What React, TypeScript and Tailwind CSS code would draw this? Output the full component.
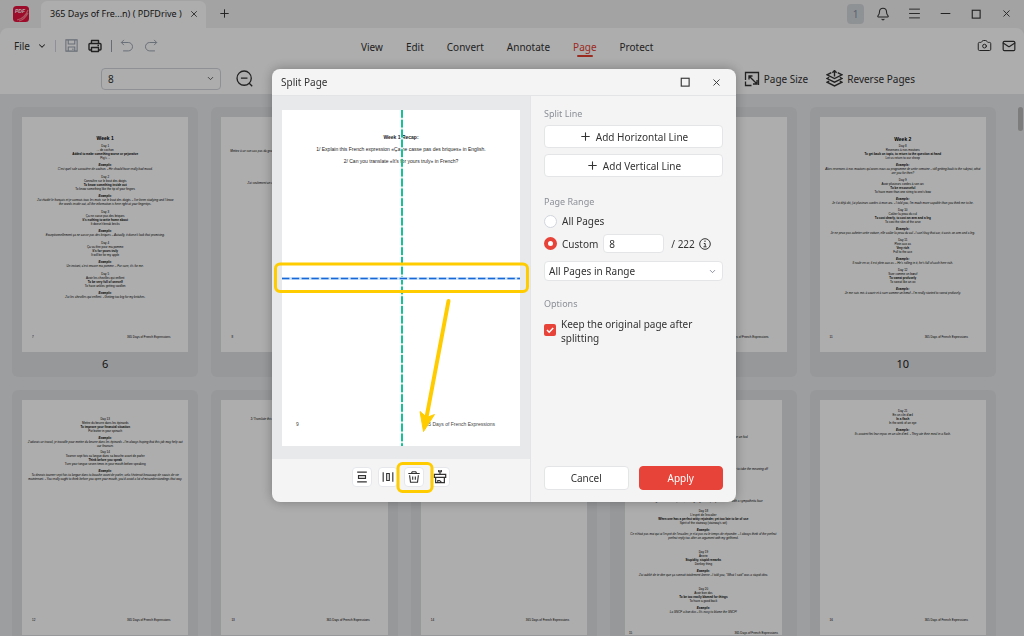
import type { ReactNode } from "react";
import { Bell, Camera, ChevronDown, Mail, Menu, Minus, Plus, X } from "lucide-react";

type Entry = {
  day: string;
  french: string;
  bold: string;
  english: string;
  example: string[];
};

type PageData = {
  label: string;
  folio: string;
  title?: string;
  top?: string;
  gap?: string;
  wide?: boolean;
  notes?: string[];
  entries?: Entry[];
};

const MENUS = ["View", "Edit", "Convert", "Annotate", "Page", "Protect"];

const PAGES: PageData[] = [
  {
    label: "6",
    folio: "7",
    title: "Week 1",
    top: "pt-[18px]",
    gap: "gap-[4px]",
    entries: [
      {
        day: "Day 1",
        french: "... de cochon",
        bold: "Added to make something worse or pejorative",
        english: "Pig's ...",
        example: ["C'est quel sale caractère de cochon. - He should have really bad mood."],
      },
      {
        day: "Day 2",
        french: "Connaître sur le bout des doigts",
        bold: "To know something inside out",
        english: "To know something like the tip of your fingers",
        example: [
          "J'ai étudié le français et je connais tous les mots sur le bout des doigts. - I've been studying and I know",
          "the words inside out, all the information is here right at your fingertips.",
        ],
      },
      {
        day: "Day 3",
        french: "Ça ne casse pas des briques",
        bold: "It's nothing to write home about",
        english: "It doesn't break bricks",
        example: ["Exceptionnellement ça ne casse pas des briques. - Actually, it doesn't look that promising."],
      },
      {
        day: "Day 4",
        french: "Ça va être pour ma pomme",
        bold: "It's for yours truly",
        english: "It will be for my apple",
        example: ["Un instant, c'est encore ma pomme. - For sure, it's for me."],
      },
      {
        day: "Day 5",
        french: "Avoir les chevilles qui enflent",
        bold: "To be very full of oneself",
        english: "To have ankles getting swollen",
        example: ["J'ai les chevilles qui enflent. - Getting too big for my britches."],
      },
    ],
  },
  {
    label: "7",
    folio: "8",
    top: "pt-[32px]",
    gap: "gap-[28px]",
    notes: [
      "Mettez à ce son cas pas du grand, si vous voulez bien, merci. - Put this on the other one, please, when you can.",
      "J'ai seulement un chien à la maison pour jouer avec les enfants. - I only have one dog.",
    ],
  },
  { label: "8", folio: "9" },
  { label: "9", folio: "10" },
  {
    label: "10",
    folio: "11",
    title: "Week 2",
    top: "pt-[19px]",
    gap: "gap-[3px]",
    entries: [
      {
        day: "Day 8",
        french: "Revenons à nos moutons",
        bold: "To get back on topic, to return to the question at hand",
        english: "Let us return to our sheep",
        example: [
          "Alors revenons à nos moutons qu'avons nous au programme de cette semaine - still getting back to the subject, what",
          "are you for then?",
        ],
      },
      {
        day: "Day 9",
        french: "Avoir plusieurs cordes à son arc",
        bold: "To be resourceful",
        english: "To have more than one string to one's bow",
        example: ["Je t'ai déjà dit, j'ai plusieurs cordes à mon arc. - I told you, I'm much more capable than you think me to be."],
      },
      {
        day: "Day 10",
        french: "Coûter la peau du cul",
        bold: "To cost dearly, to cost an arm and a leg",
        english: "To cost the skin of the arse",
        example: ["Je ne peux pas acheter cette voiture, elle coûte la peau du cul - I can't buy that car, it costs an arm and a leg."],
      },
      {
        day: "Day 11",
        french: "Plein aux as",
        bold: "Very rich",
        english: "Full to the ace",
        example: ["Il roule en or, il est plein aux as. - He's rolling in it, he's full of cash here rich."],
      },
      {
        day: "Day 12",
        french: "Suer comme un bœuf",
        bold: "To sweat profusely",
        english: "To sweat like an ox",
        example: ["Je me suis mis à courir et à suer comme un bœuf - I'm really started to sweat profusely."],
      },
    ],
  },
  {
    label: "11",
    folio: "12",
    top: "pt-[17px]",
    gap: "gap-[2px]",
    entries: [
      {
        day: "Day 13",
        french: "Mettre du beurre dans les épinards",
        bold: "To improve your financial situation",
        english: "Put butter in your spinach",
        example: [
          "J'adorais ce travail, je travaille pour mettre du beurre dans les épinards - I'm always hoping that this job may help out",
          "our finances",
        ],
      },
      {
        day: "Day 14",
        french: "Tourner sept fois sa langue dans sa bouche avant de parler",
        bold: "Think before you speak",
        english: "Turn your tongue seven times in your mouth before speaking",
        example: [
          "Tu devrais tourner sept fois ta langue dans ta bouche avant de parler, cela t'éviterait beaucoup de soucis de vie",
          "maintenant. - You really ought to think before you open your mouth, you'd avoid a lot of misunderstandings that way.",
        ],
      },
    ],
  },
  {
    label: "12",
    folio: "13",
    top: "pt-[17px]",
    gap: "gap-[8px]",
    notes: ["1/ Translate this French expression «Avoir plusieurs cordes à son arc» in English."],
  },
  { label: "13", folio: "14" },
  {
    label: "14",
    folio: "15",
    wide: true,
    top: "pt-[35px]",
    gap: "gap-[10px]",
    notes: [
      "Il a toujours le mot pour rire, il m'a bien fait marcher comme un fool",
      "Tu ne peux pas comprendre sans écouter, il faut savoir - keep it simple or to take the meaning off",
      "J'ai changé mon fusil d'épaule, I was going to the party but I went with a sympathetic face",
    ],
    entries: [
      {
        day: "Day 18",
        french: "L'esprit de l'escalier",
        bold: "When one has a perfect witty rejoinder, yet too late to be of use",
        english: "Spirit of the stairway (stairway's wit)",
        example: [
          "Ce n'était pas moi qui ai l'esprit de l'escalier, je n'ai pas eu le temps de répondre. - I always think of the perfect",
          "perfect reply too after an argument with my girlfriend.",
        ],
      },
      {
        day: "Day 19",
        french: "Ânerie",
        bold: "Stupidity, stupid remarks",
        english: "Donkey thing",
        example: ["J'ai oublié de te dire que ça sonnait totalement ânerie - I told you, \"What I said\" was a stupid idea."],
      },
      {
        day: "Day 20",
        french: "Avoir bon dos",
        bold: "To be too easily blamed for things",
        english: "To have a good back",
        example: ["La SNCF a bon dos - It's easy to blame the SNCF!"],
      },
    ],
  },
  {
    label: "15",
    folio: "16",
    top: "pt-[9px]",
    gap: "gap-[4px]",
    entries: [
      {
        day: "Day 21",
        french: "En un clin d'œil",
        bold: "In a flash",
        english: "In the wink of an eye",
        example: ["Ils avaient fini leur repas en un clin d'œil. - They ate their meal in a flash."],
      },
    ],
  },
];

function DayEntry({ entry }: { entry: Entry }) {
  return (
    <div className="whitespace-nowrap">
      <p>{entry.day}</p>
      <p>{entry.french}</p>
      <p className="font-bold">{entry.bold}</p>
      <p>{entry.english}</p>
      <p className="mt-[3px] font-bold italic">Example:</p>
      {entry.example.map((line) => (
        <p key={line} className="italic">
          {line}
        </p>
      ))}
    </div>
  );
}

function Thumbnail({ page }: { page: PageData }) {
  return (
    <div className="min-w-0 rounded-md bg-[#dfe1e3] px-2.5 pt-2.5">
      <div
        className={`mx-auto flex h-[235px] flex-col overflow-hidden bg-white text-center font-['Liberation_Sans',sans-serif] text-[3px] leading-[4px] text-black ${
          page.wide ? "w-[157px] pb-0" : "w-full pb-[13px]"
        }`}
      >
        <div className={`flex flex-col items-center ${page.top ?? ""} ${page.wide ? "gap-[28px]" : page.gap ?? ""}`}>
          {page.title && <h2 className="-mb-px text-[5px] font-bold leading-[6px]">{page.title}</h2>}
          {page.notes?.map((note) => (
            <p key={note} className="whitespace-nowrap italic">
              {note}
            </p>
          ))}
          {!page.wide && page.entries?.map((entry) => <DayEntry key={entry.day} entry={entry} />)}
        </div>
        {page.wide && (
          <div className={`mt-1.5 flex flex-col items-center ${page.gap ?? ""}`}>
            {page.entries?.map((entry) => <DayEntry key={entry.day} entry={entry} />)}
          </div>
        )}
        <div className={`mt-auto flex justify-between ${page.wide ? "px-1" : "pl-2.5 pr-[18px]"}`}>
          <span>{page.folio}</span>
          <span>365 Days of French Expressions</span>
        </div>
      </div>
      <p className="h-[25px] text-center text-[11px] leading-6 text-[#222]">{page.label}</p>
    </div>
  );
}

function Svg({ children, size = 16 }: { children: ReactNode; size?: number }) {
  return (
    <svg width={size} height={size} viewBox="0 0 16 16" fill="none" stroke="currentColor" strokeWidth="1.1">
      {children}
    </svg>
  );
}

function TitleBar() {
  return (
    <header className="flex h-[29px] items-center pl-3 pr-2">
      <svg width="18" height="18" viewBox="0 0 18 18" aria-label="PDF">
        <rect x="1" y="1" width="16" height="16" rx="3.5" fill="#e8123e" />
        <path d="M5 15c5-1 9-4 11-10M7 16c4-1 7-4 9-8" stroke="#ff7f91" strokeWidth="1.2" fill="none" />
        <text x="3" y="8" fontSize="5" fontWeight="700" fontStyle="italic" fill="#fff" fontFamily="Liberation Sans">
          PDF
        </text>
      </svg>
      <div className="ml-[11px] flex h-[27px] w-[165px] items-center justify-between self-end rounded-t-md bg-white pl-[9px] pr-[7px]">
        <span className="whitespace-nowrap text-[9px] text-[#222]">365 Days of Fre...n) ( PDFDrive )</span>
        <button aria-label="Close tab">
          <X size={10} />
        </button>
      </div>
      <button aria-label="New tab" className="ml-3">
        <Plus size={13} strokeWidth={1.8} />
      </button>
      <div className="ml-auto flex items-center">
        <span className="mr-3 flex h-5 w-[17px] items-center justify-center rounded bg-[#d3d7dc] text-[#8492a6]">1</span>
        <button aria-label="Notifications" className="mr-[17px]">
          <Bell size={14} strokeWidth={1.8} />
        </button>
        <button aria-label="Menu" className="mr-4">
          <Menu size={15} strokeWidth={1.5} />
        </button>
        <button aria-label="Minimize" className="mr-[17px]">
          <Minus size={15} strokeWidth={1.8} />
        </button>
        <button aria-label="Maximize" className="mr-[19px]">
          <Svg size={12}>
            <rect x="3" y="3" width="10.5" height="10.5" strokeWidth="1.5" />
          </Svg>
        </button>
        <button aria-label="Close" className="mr-1">
          <X size={11} />
        </button>
      </div>
    </header>
  );
}

function Toolbar() {
  return (
    <div className="rounded-t-lg bg-white">
      <div className="flex h-9 items-center pl-3.5 pr-2">
        <div className="flex w-[347px] shrink-0 items-center">
          <button className="flex items-center gap-[7px]">
            File <ChevronDown size={10} strokeWidth={2.5} />
          </button>
          <span className="ml-2 h-3 w-px bg-gray-300" />
          <button aria-label="Save" className="ml-2 text-gray-400">
            <Svg size={15}>
              <path d="M2 2h12v12H2zM4.500 2v4.500h7V2M4.500 14V9.500h7V14M9.500 11.200v1.500" />
            </Svg>
          </button>
          <button aria-label="Print" className="ml-2">
            <Svg>
              <path
                d="M4.5 5V2.5h7V5M4.5 12H3a1 1 0 0 1-1-1V6.5a1 1 0 0 1 1-1h10a1 1 0 0 1 1 1V11a1 1 0 0 1-1 1h-1.5M4.5 9.5h7v4h-7zM10.5 7.5H12"
                strokeWidth="1.4"
                strokeLinejoin="round"
              />
            </Svg>
          </button>
          <span className="ml-2 h-3 w-px bg-gray-400" />
          <button aria-label="Undo" className="ml-2 text-gray-400">
            <Svg size={14}>
              <path d="M4.5 1l-3 3 3 3M1.5 4h8a4.8 4.8 0 0 1 0 9.6h-6" />
            </Svg>
          </button>
          <button aria-label="Redo" className="ml-2.5 text-gray-400">
            <Svg size={14}>
              <path d="M11.5 1l3 3-3 3M14.5 4h-8a4.8 4.8 0 0 0 0 9.6h6" />
            </Svg>
          </button>
        </div>
        <nav className="flex gap-[23px] pt-0.5">
          {MENUS.map((menu) => (
            <a
              key={menu}
              href="#"
              className={
                menu === "Page"
                  ? "relative text-[#e5402f] after:absolute after:inset-x-1 after:-bottom-0.5 after:h-0.5 after:rounded after:bg-[#e5402f]"
                  : "relative"
              }
            >
              {menu}
            </a>
          ))}
        </nav>
        <div className="ml-auto flex items-center gap-2.5">
          <button aria-label="Snapshot">
            <Camera size={15} strokeWidth={1.6} />
          </button>
          <button aria-label="Mail">
            <Mail size={14} strokeWidth={2} />
          </button>
        </div>
      </div>
      <div className="flex h-[30px] items-center pl-[101px] pr-[109px]">
        <label className="grid items-center">
          <span className="sr-only">Page number</span>
          <select className="col-start-1 row-start-1 h-[22px] w-[120px] appearance-none rounded border border-gray-300 bg-white px-1.5">
            <option>8</option>
          </select>
          <ChevronDown size={9} className="pointer-events-none col-start-1 row-start-1 mr-1.5 justify-self-end" />
        </label>
        <button aria-label="Zoom out" className="ml-3.5">
          <Svg size={19}>
            <path d="M7.7 1.7a6 6 0 1 0 0 12 6 6 0 0 0 0-12zM5 7.7h5.5M12 12l2.5 2.5" />
          </Svg>
        </button>
        <button className="ml-auto flex items-center gap-1">
          <Svg>
            <path d="M1.5 9V1.5h13V14M1.5 10.5v4h6M5 8.5V5h3.5M5 5l7.5 7.5M13 9v4H9" strokeWidth="1.3" />
          </Svg>
          Page Size
        </button>
        <button className="ml-[18px] flex items-center gap-1">
          <Svg size={17}>
            <path
              d="M5 2.5l-4 2L8 8l7-3.5-4-2M8 .5V6M6 2.5l2-2 2 2M3 7L1 8l7 3.500L15 8l-2-1M3 10.5l-2 1L8 15l7-3.5-2-1"
              strokeWidth="1.3"
            />
          </Svg>
          Reverse Pages
        </button>
      </div>
    </div>
  );
}

const toolButton = "flex size-5 items-center justify-center rounded border border-gray-200 bg-white";

function PreviewPane() {
  return (
    <div className="relative flex w-[259px] shrink-0 flex-col border-r border-[#e3e4e6]">
      <div className="bg-[#e7e9eb] px-2.5 pb-[13px] pt-3.5">
        <div className="flex h-[336px] flex-col items-center bg-white pt-[21px] font-['Liberation_Sans',sans-serif] text-[5px] leading-[12px] text-[#222]">
          <p className="font-bold">Week 1 Recap:</p>
          <p>1/ Explain this French expression «Ça ne casse pas des briques» in English.</p>
          <p>2/ Can you translate «It's for yours truly» in French?</p>
          <div className="mb-4 mt-auto flex w-full justify-between pl-3.5 pr-[25px] text-[#444]">
            <span>9</span>
            <span>365 Days of French Expressions</span>
          </div>
        </div>
      </div>
      <div className="flex grow justify-center gap-1.5 pt-2">
        <button aria-label="Split evenly by rows" className={toolButton}>
          <Svg size={14}>
            <path d="M2.5 2.5h11M2.5 13.5h11M4 6.5h8v3H4z" strokeWidth="1.3" />
          </Svg>
        </button>
        <button aria-label="Split evenly by columns" className={toolButton}>
          <Svg size={14}>
            <path d="M2.5 2.5v11M13.5 2.5v11M6.500 4h3v8h-3z" strokeWidth="1.3" />
          </Svg>
        </button>
        <button aria-label="Delete line" className={toolButton}>
          <Svg size={14}>
            <path d="M1.5 4h13M5 4l1-2h4l1 2M3 6l1 8h8l1-8M6.5 7.5V11M9.5 7.5V11" strokeWidth="1.3" />
          </Svg>
        </button>
        <button aria-label="Clear all lines" className={toolButton}>
          <Svg size={14}>
            <path d="M6.5 0h3v2h-3zM8 2v3M1.5 5h13v3.5h-13zM3 8.5v6h10v-6M5.5 14.5V12h2l2.5 2.5" strokeWidth="1.4" />
          </Svg>
        </button>
      </div>
      {/* split guides and callouts */}
      <svg className="pointer-events-none absolute inset-0" width="258" height="406" viewBox="0 0 258 406" fill="none">
        <path d="M130 14v336" stroke="#d9f6ee" strokeWidth="2" />
        <path d="M130 14v336" stroke="#15c196" strokeWidth="2" strokeDasharray="7.8 2" />
        <path d="M10 182.5h238" stroke="#d3e5fb" strokeWidth="3" />
        <path d="M10 182.5h238" stroke="#1668d8" strokeWidth="1.6" strokeDasharray="7.4 2.4" />
        <rect x="3.5" y="168" width="252" height="27.5" rx="4.5" stroke="#fc0" strokeWidth="3" />
        <rect x="126" y="367.5" width="34" height="28" rx="4.5" stroke="#fc0" strokeWidth="3" />
        <path d="M176.5 205L154 324" stroke="#fc0" strokeWidth="4" strokeLinecap="round" />
        <path d="m151.5 335.5 11-17-7.5 3-7-6z" fill="#fc0" stroke="#fc0" />
      </svg>
    </div>
  );
}

const fieldLook = "rounded border border-[#e4e5e7] bg-white";
const radioLook =
  "size-[13px] appearance-none rounded-full border border-gray-300 bg-white checked:border-4 checked:border-[#e84338]";
const sectionTitle = "text-[9px] leading-[14px] text-[#8b8f97]";

function SettingsPane() {
  return (
    <div className="flex grow flex-col px-[13px] pb-3 pt-[11px]">
      <h2 className={sectionTitle}>Split Line</h2>
      <button className={`mt-1 flex h-[23px] items-center justify-center gap-1 ${fieldLook}`}>
        <Plus size={13} strokeWidth={2} /> Add Horizontal Line
      </button>
      <button className={`mt-1.5 flex h-[23px] items-center justify-center gap-1 ${fieldLook}`}>
        <Plus size={13} strokeWidth={2} /> Add Vertical Line
      </button>

      <h2 className={`mt-[18px] ${sectionTitle}`}>Page Range</h2>
      <label className="mt-[3px] flex h-[18px] items-center gap-[5px]">
        <input type="radio" name="range" className={radioLook} />
        All Pages
      </label>
      <div className="mt-1 flex h-[19px] items-center">
        <label className="flex items-center gap-[5px]">
          <input type="radio" name="range" defaultChecked className={radioLook} />
          Custom
        </label>
        <input aria-label="Pages" defaultValue="8" className={`ml-[5px] h-[19px] w-[61px] px-[5px] ${fieldLook}`} />
        <span className="ml-[7px]">/ 222</span>
        <svg className="ml-1" width="12" height="12" viewBox="0 0 12 12" fill="none" stroke="#333" aria-label="Info">
          <circle cx="6" cy="6" r="5.3" />
          <path d="M6 2.5V4M4.8 5.5h1.4v3M4.5 8.8h3" />
        </svg>
      </div>
      <label className="mt-2 grid items-center">
        <span className="sr-only">Subset</span>
        <select className={`col-start-1 row-start-1 h-5 appearance-none px-1 ${fieldLook}`}>
          <option>All Pages in Range</option>
        </select>
        <ChevronDown size={9} className="pointer-events-none col-start-1 row-start-1 mr-1.5 justify-self-end text-gray-500" />
      </label>

      <h2 className={`mt-4 ${sectionTitle}`}>Options</h2>
      <label className="mt-1.5 flex gap-[5px]">
        <span className="mt-[7px] grid size-3 shrink-0">
          <input
            type="checkbox"
            defaultChecked
            className="col-start-1 row-start-1 size-3 appearance-none rounded-xs bg-white checked:bg-[#e84338]"
          />
          <svg className="pointer-events-none col-start-1 row-start-1" viewBox="0 0 12 12" fill="none" stroke="#fff" strokeWidth="1.5">
            <path d="m3 6 2.2 2.2L9.2 4" />
          </svg>
        </span>
        <span className="leading-[14px]">Keep the original page after splitting</span>
      </label>

      <div className="mt-auto flex gap-2.5">
        <button className={`h-6 flex-1 ${fieldLook}`}>Cancel</button>
        <button className="h-6 flex-1 rounded border border-[#e84338] bg-[#e84338] text-white">Apply</button>
      </div>
    </div>
  );
}

function SplitDialog() {
  return (
    <div className="fixed inset-0 flex items-start justify-center bg-black/32 pr-4 pt-[69px]">
      <div
        role="dialog"
        aria-label="Split Page"
        className="w-[464px] overflow-hidden rounded-lg bg-[#f4f4f4] text-[#333] shadow-[0_0_12px_rgba(0,0,0,0.3)]"
      >
        <div className="flex h-[27px] items-center border-b border-[#e3e4e6] pl-[9px] pr-3.5">
          <h1>Split Page</h1>
          <button aria-label="Maximize" className="ml-auto mr-5">
            <Svg size={12}>
              <rect x="3" y="3" width="10.5" height="10.5" strokeWidth="1.5" />
            </Svg>
          </button>
          <button aria-label="Close">
            <X size={11} />
          </button>
        </div>
        <div className="flex h-[406px]">
          <PreviewPane />
          <SettingsPane />
        </div>
      </div>
    </div>
  );
}

export default function App() {
  return (
    <div className="flex h-screen flex-col overflow-hidden bg-[#f0f0f0] font-['Noto_Sans',sans-serif] text-[10px] leading-4 text-[#333]">
      <TitleBar />
      <Toolbar />
      <main className="flex min-h-0 grow bg-[#e7e9eb] pt-[13px]">
        <div className="grid h-max grow grid-cols-5 gap-x-[13px] gap-y-[13px] pl-3 pr-[22px]">
          {PAGES.map((page) => (
            <Thumbnail key={page.label} page={page} />
          ))}
        </div>
        <div className="mr-px h-6 w-[5px] rounded bg-[#b8b8b8]" />
      </main>
      <SplitDialog />
    </div>
  );
}
